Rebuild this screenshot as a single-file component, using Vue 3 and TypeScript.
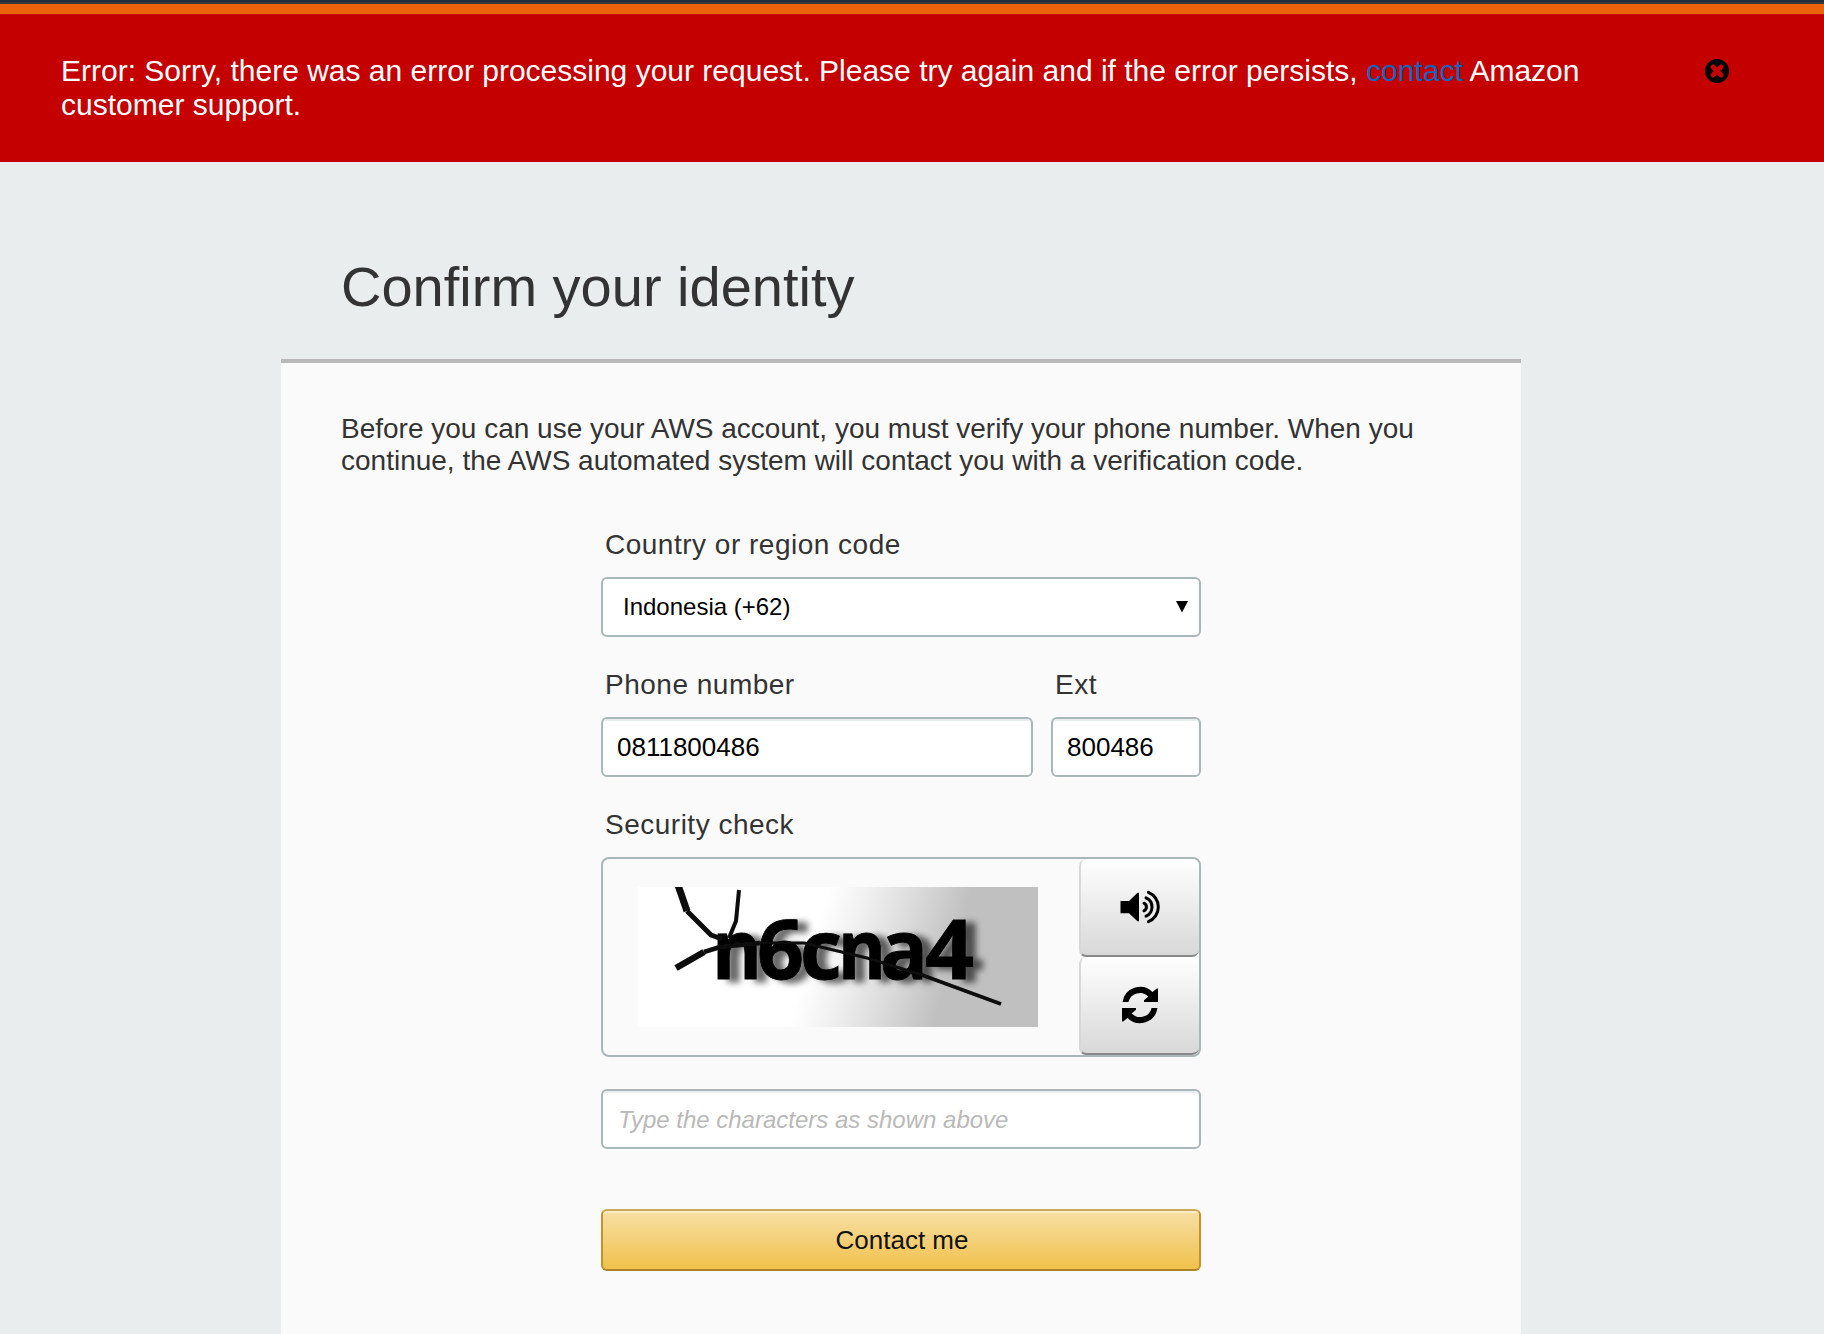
<script setup lang="ts">
import { ref } from 'vue'

interface Glyph {
  char: string
  x: number
  width: number
}

const country = ref('Indonesia (+62)')
const phone = ref('0811800486')
const ext = ref('800486')
const answer = ref('')
const errorVisible = ref(true)

const glyphs: Glyph[] = [
  { char: 'n', x: 74, width: 50 },
  { char: '6', x: 119, width: 47 },
  { char: 'c', x: 162, width: 42 },
  { char: 'n', x: 200, width: 48 },
  { char: 'a', x: 242, width: 48 },
  { char: '4', x: 287, width: 49 },
]
</script>

<template>
  <div class="page">
    <header class="topbar"></header>
    <section v-if="errorVisible" class="alert">
      <p class="alert-text">
        <span>Error: Sorry, there was an error processing your request. Please try again and if the error persists, <a class="link">contact</a> Amazon</span><br />
        <span>customer support.</span>
      </p>
      <button class="close" type="button" aria-label="Close" @click="errorVisible = false">
        <svg width="24" height="24" viewBox="0 0 24 24">
          <circle cx="12" cy="12" r="12" />
          <path d="M8 8l8 8M16 8l-8 8" stroke="#c40000" stroke-width="5" stroke-linecap="round" />
        </svg>
      </button>
    </section>

    <main class="main">
      <h1>Confirm your identity</h1>
      <div class="card">
        <p class="intro">
          <span>Before you can use your AWS account, you must verify your phone number. When you</span><br />
          <span>continue, the AWS automated system will contact you with a verification code.</span>
        </p>
        <form class="form" @submit.prevent>
          <label class="field">
            <span class="label">Country or region code</span>
            <span class="select">
              <span>{{ country }}</span>
              <svg width="12" height="12" viewBox="0 0 12 12"><path d="M0 0h12L6 11.5z" /></svg>
            </span>
          </label>
          <div class="row">
            <label class="field phone">
              <span class="label">Phone number</span>
              <input v-model="phone" type="text" />
            </label>
            <label class="field ext">
              <span class="label">Ext</span>
              <input v-model="ext" type="text" />
            </label>
          </div>
          <div class="field">
            <span class="label">Security check</span>
            <div class="captcha">
              <svg class="challenge" width="400" height="140" viewBox="0 0 400 140">
                <defs>
                  <linearGradient id="shade" gradientUnits="userSpaceOnUse" x1="170" y1="72" x2="304" y2="110">
                    <stop offset="0" stop-color="#fff" />
                    <stop offset="0.25" stop-color="#f2f2f2" />
                    <stop offset="0.6" stop-color="#dcdcdc" />
                    <stop offset="1" stop-color="#c0c0c0" />
                  </linearGradient>
                  <filter id="soft" x="-5%" y="-5%" width="110%" height="110%">
                    <feGaussianBlur stdDeviation="0.6" />
                  </filter>
                </defs>
                <rect width="400" height="140" fill="url(#shade)" />
                <g class="chars">
                  <text v-for="g in glyphs" :key="g.x" :x="g.x" y="92" :textLength="g.width" lengthAdjust="spacingAndGlyphs">{{ g.char }}</text>
                </g>
                <g fill="none" stroke="#0a0a0a" stroke-linejoin="round" filter="url(#soft)">
                  <path d="M40-2L49 24" stroke-width="7" />
                  <path d="M49 24L73 48L84 52" stroke-width="5" />
                  <path d="M101 3L98 34L91 51" stroke-width="4" />
                  <path d="M38 81L66 65" stroke-width="6.5" />
                  <path d="M66 65L82 60L122 56" stroke-width="4.5" />
                  <path d="M122 56L166 56L229 71L284 88" stroke-width="3" />
                  <path d="M284 88L363 117" stroke-width="3.6" />
                </g>
              </svg>
              <div class="tools">
                <button class="tool" type="button" aria-label="Play audio">
                  <svg width="40" height="30" viewBox="0 0 40 30">
                    <path d="M.5 9H9L17.5.8H19v28.4h-1.5L9 21.3H.5z" />
                    <g fill="none" stroke="#000" stroke-width="3" stroke-linecap="round">
                      <path d="M24 11.2a4.2 4.2 0 0 1 0 7.6" />
                      <path d="M26 5.9a9.9 9.9 0 0 1 0 18.2" />
                      <path d="M28.4 .4a15.7 15.7 0 0 1 0 29.2" />
                    </g>
                  </svg>
                </button>
                <button class="tool" type="button" aria-label="Refresh">
                  <svg width="36" height="36" viewBox="0 0 36 36">
                    <path id="turn" d="M.6 15A17.6 17.6 0 0 1 30.5 5.1L34.8 1.6H36V15H22V13.2L26.3 9.5A11.8 11.8 0 0 0 6.4 15z" />
                    <use href="#turn" transform="rotate(180 18 18)" />
                  </svg>
                </button>
              </div>
            </div>
          </div>
          <input v-model="answer" class="answer" type="text" placeholder="Type the characters as shown above" />
          <button class="submit" type="submit">Contact me</button>
        </form>
      </div>
    </main>
  </div>
</template>

<style>
body {
  margin: 0;
  background: #e9eded;
}
</style>

<style scoped>
.page {
  height: 1334px;
  overflow: hidden;
  display: flex;
  flex-direction: column;
  background: #e9eded;
  color: #333;
  font-family: "Liberation Sans", Arial, sans-serif;
}
svg {
  display: block;
  overflow: visible;
}
.topbar {
  height: 2px;
  flex: none;
  background: #232f3e;
  border-bottom: 2px solid #3a3a3a;
}
.alert {
  box-sizing: border-box;
  height: 158px;
  flex: none;
  display: flex;
  justify-content: space-between;
  align-items: flex-start;
  padding: 40px 95px 0 61px;
  border-top: 10px solid #ec6208;
  background: #c40000;
  color: #fff;
}
.alert-text {
  margin: 0;
  font-size: 30px;
  line-height: 34px;
  white-space: nowrap;
}
.link {
  color: #0f65c0;
}
.close {
  margin: 5px 0 0;
  padding: 0;
  border: 0;
  background: none;
}
.main {
  width: 1240px;
  margin-left: 281px;
  flex: 1;
  display: flex;
  flex-direction: column;
}
h1 {
  margin: 93px 0 40px 60px;
  font-size: 56px;
  line-height: 64px;
  font-weight: 400;
}
.card {
  flex: 1;
  border-top: 4px solid #b9b9b9;
  background: #fafafa;
}
.intro {
  margin: 50px 0 52px 60px;
  font-size: 28px;
  line-height: 32px;
  white-space: nowrap;
}
.form {
  width: 600px;
  margin-left: 320px;
  display: flex;
  flex-direction: column;
}
.field {
  display: flex;
  flex-direction: column;
  margin-bottom: 32px;
}
.label {
  height: 48px;
  padding-left: 4px;
  font-size: 28px;
  line-height: 32px;
  letter-spacing: 0.5px;
}
.row {
  display: flex;
  gap: 18px;
}
.phone {
  width: 432px;
}
.ext {
  width: 150px;
}
input,
.select {
  box-sizing: border-box;
  width: 100%;
  height: 60px;
  border: 2px solid #aab7b8;
  border-radius: 6px;
  background: #fff;
  color: #000;
}
input {
  padding: 0 14px;
  font: 26px "Liberation Sans", Arial, sans-serif;
  box-shadow: inset 0 2px 0 #ebeeee, 0 2px 0 rgba(255, 255, 255, 0.5);
}
.select {
  display: flex;
  align-items: center;
  justify-content: space-between;
  padding: 0 11px 0 20px;
  font-size: 24px;
}
.captcha {
  box-sizing: border-box;
  height: 200px;
  display: flex;
  justify-content: space-between;
  padding-left: 35px;
  border: 2px solid #aab7b8;
  border-radius: 8px;
}
.challenge {
  margin-top: 28px;
  overflow: hidden;
}
.chars {
  font-family: "Open Sans", "Noto Sans", sans-serif;
  font-weight: 700;
  font-size: 83px;
  fill: #000;
  stroke: #000;
  stroke-width: 0.8px;
  filter: blur(0.5px) drop-shadow(10px 3px 3px rgba(0, 0, 0, 0.6));
}
.tools {
  width: 120px;
  display: flex;
  flex-direction: column;
}
.tool {
  box-sizing: border-box;
  flex: 1;
  display: flex;
  align-items: center;
  justify-content: center;
  padding: 0;
  border: 0 solid #d8d8d8;
  border-left-width: 2px;
  border-bottom: 2px solid #888;
  border-radius: 7px;
  background: linear-gradient(#fff, #d8d8d8);
}
.answer {
  padding-left: 15px;
}
.answer::placeholder {
  color: #b9b9b9;
  font-size: 24px;
  font-style: italic;
  opacity: 1;
}
.submit {
  height: 62px;
  margin-top: 60px;
  padding: 0 0 0 2px;
  border: 2px solid;
  border-color: #cba957 #bf942a #aa8326;
  border-radius: 6px;
  background: linear-gradient(#f7dfa5, #f0c14b);
  box-shadow: inset 0 2px 0 rgba(255, 255, 255, 0.4);
  color: #111;
  font: 26px "Liberation Sans", Arial, sans-serif;
}
</style>
